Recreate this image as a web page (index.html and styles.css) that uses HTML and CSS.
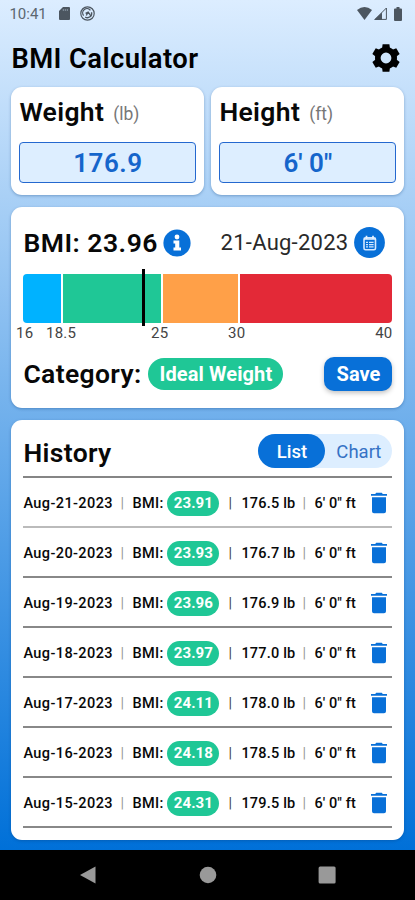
FILE: index.html
```html
<!DOCTYPE html>
<html lang="en">
<head>
<meta charset="utf-8">
<title>BMI Calculator</title>
<link rel="stylesheet" href="styles.css">
</head>
<body>
<svg width="0" height="0" class="defs">
  <symbol id="trash" viewBox="0 0 16 22"><path d="M0 2h4.2L5.2.8h5.6l1 1.2H16v1.7H0zM1 5.2h14v14a2 2 0 0 1-2 2H3a2 2 0 0 1-2-2z"/></symbol>
</svg>
<main class="app">
  <div class="status">
    <span class="clock">10:41</span>
    <svg class="sd" viewBox="0 0 11 13"><path d="M4 0h6q1 0 1 1v11q0 1-1 1H1q-1 0-1-1V4z" fill="#4c5660"/><path d="M4.3 2v2M6.3 2v2M8.3 2v2" stroke="#8795a3"/></svg>
    <svg class="sync" viewBox="0 0 15 15" fill="none" stroke="#4c5660"><circle cx="7.5" cy="7.5" r="6.7" stroke-width="1.2"/><path d="M3.6 9.6A4.3 4.3 0 0 1 10.4 4.3M11.5 6.2A4.3 4.3 0 0 1 5.2 11.1" stroke-width="1.3"/><path d="M5.6 7.3 8.2 6l2.9 4.3M8.2 6 6.3 9.5" stroke-width="1.3"/></svg>
    <span class="grow"></span>
    <svg class="wifi" viewBox="0 0 15 13"><path d="M0 3Q7.5-3 15 3L7.5 13z" fill="#4c5660"/></svg>
    <svg class="signal" viewBox="0 0 13 13"><path d="M12.4 1v11.4H1z" fill="none" stroke="#4c5660"/><path d="M8 5.4V13H0z" fill="#4c5660"/></svg>
    <svg class="battery" viewBox="0 0 8 14"><path d="M2.5 0h3v1.4H7q1 0 1 1V13q0 1-1 1H1q-1 0-1-1V2.4q0-1 1-1h1.5z" fill="#4c5660"/></svg>
  </div>
  <header class="header">
    <h1>BMI Calculator</h1>
    <svg class="gear" viewBox="0 0 28 28"><g transform="translate(14 14)"><circle r="8.2" fill="none" stroke="#000" stroke-width="5.6"/><path id="tooth" d="M-4-9-3.4-13.8H3.4L4-9z"/><use href="#tooth" transform="rotate(60)"/><use href="#tooth" transform="rotate(120)"/><use href="#tooth" transform="rotate(180)"/><use href="#tooth" transform="rotate(240)"/><use href="#tooth" transform="rotate(300)"/></g></svg>
  </header>
  <div class="inputs">
    <section class="card measure"><h2>Weight<small>(lb)</small></h2><div class="field">176.9</div></section>
    <section class="card measure"><h2>Height<small>(ft)</small></h2><div class="field feet">6' 0"</div></section>
  </div>
  <section class="card result">
    <div class="summary">
      <h2 class="bmi">BMI: 23.96</h2>
      <svg class="info" viewBox="0 0 28 28"><circle cx="14" cy="14" r="13.6" fill="#0870d8"/><circle cx="14" cy="8" r="2.4" fill="#fff"/><path d="M10.5 11.5h5.8v7h1.7v3h-7.5v-3h1.7v-4h-1.7z" fill="#fff"/></svg>
      <span class="date">21-Aug-2023</span>
      <svg class="calendar" viewBox="0 0 31 31"><circle cx="15.5" cy="15.5" r="15.4" fill="#0870d8"/><rect x="10" y="10.7" width="11.5" height="12" rx="1.5" fill="none" stroke="#d4e8ff" stroke-width="1.6"/><path d="M12.5 8.7v3M19 8.7v3M10 12h11.5" stroke="#e6f2ff" stroke-width="1.7"/><path d="M12 15.3h2M15 15.3h4.6M12 17.6h2M15 17.6h4.6M12 19.9h2M15 19.9h4.6" stroke="#d4e8ff" stroke-width="1.2"/></svg>
    </div>
    <div class="scale">
      <i class="under"></i><i class="ideal"></i><i class="over"></i><i class="obese"></i>
      <b class="marker"></b>
    </div>
    <div class="ticks"><span>16</span><span>18.5</span><span>25</span><span>30</span><span>40</span></div>
    <div class="category"><h2>Category:</h2><span class="badge">Ideal Weight</span><span class="grow"></span><button class="save">Save</button></div>
  </section>
  <section class="card history">
    <div class="history-head"><h2>History</h2><div class="toggle"><span class="on">List</span><span class="off">Chart</span></div></div>
    <ul>
      <li><span>Aug-21-2023</span><i>|</i><span class="label">BMI:</span><b>23.91</b><i class="dark">|</i><span class="lb">176.5 lb</span><i>|</i><span class="ft">6' 0" ft</span><svg><use href="#trash"/></svg></li>
      <li><span>Aug-20-2023</span><i>|</i><span class="label">BMI:</span><b>23.93</b><i class="dark">|</i><span class="lb">176.7 lb</span><i>|</i><span class="ft">6' 0" ft</span><svg><use href="#trash"/></svg></li>
      <li><span>Aug-19-2023</span><i>|</i><span class="label">BMI:</span><b>23.96</b><i class="dark">|</i><span class="lb">176.9 lb</span><i>|</i><span class="ft">6' 0" ft</span><svg><use href="#trash"/></svg></li>
      <li><span>Aug-18-2023</span><i>|</i><span class="label">BMI:</span><b>23.97</b><i class="dark">|</i><span class="lb">177.0 lb</span><i>|</i><span class="ft">6' 0" ft</span><svg><use href="#trash"/></svg></li>
      <li><span>Aug-17-2023</span><i>|</i><span class="label">BMI:</span><b>24.11</b><i class="dark">|</i><span class="lb">178.0 lb</span><i>|</i><span class="ft">6' 0" ft</span><svg><use href="#trash"/></svg></li>
      <li><span>Aug-16-2023</span><i>|</i><span class="label">BMI:</span><b>24.18</b><i class="dark">|</i><span class="lb">178.5 lb</span><i>|</i><span class="ft">6' 0" ft</span><svg><use href="#trash"/></svg></li>
      <li><span>Aug-15-2023</span><i>|</i><span class="label">BMI:</span><b>24.31</b><i class="dark">|</i><span class="lb">179.5 lb</span><i>|</i><span class="ft">6' 0" ft</span><svg><use href="#trash"/></svg></li>
    </ul>
  </section>
</main>
<nav class="nav">
  <svg viewBox="0 0 18 18"><path d="M16.5.6v16.8L1 9z"/></svg>
  <svg viewBox="0 0 18 18"><circle cx="9" cy="9" r="8.3"/></svg>
  <svg viewBox="0 0 18 18"><rect x=".6" y=".6" width="17" height="17" rx="1.5"/></svg>
</nav>
</body>
</html>
```
FILE: styles.css
```css
* { box-sizing: border-box; }
body { margin: 0; width: 415px; height: 900px; overflow: hidden; font-family: Roboto, sans-serif; color: #080808; background: #000; }
h1, h2, ul { margin: 0; padding: 0; }
h1, h2 { font-weight: 600; white-space: nowrap; }
svg { display: block; flex: none; }
.defs { position: absolute; }
.grow { flex: 1; }
.app { height: 850px; padding: 0 10.6px 0 11.4px; background: linear-gradient(#dcedff, #0070d8); }
.status { height: 27px; display: flex; align-items: center; }
.clock { width: 47px; margin-left: -2px; font-size: 15px; color: #5c6771; white-space: nowrap; }
.sd { width: 11px; height: 13px; margin-left: 3px; }
.sync { width: 15px; height: 15px; margin-left: 10px; }
.wifi { width: 15px; height: 13px; margin-right: 2px; }
.signal { width: 13px; height: 13px; margin-right: 7px; }
.battery { width: 8px; height: 14px; margin-right: 2px; }
.header { height: 60px; display: flex; justify-content: space-between; align-items: center; padding: 3px 4px 0 0; }
h1 { font-size: 27.4px; letter-spacing: .4px; color: #000; }
.gear { width: 28px; height: 28px; margin-bottom: 2px; }
.card { background: #fff; border-radius: 11px; box-shadow: 0 1px 3px rgba(10, 60, 120, .35); }
.inputs { display: flex; gap: 7px; height: 108px; }
.measure { width: 193px; padding: 9px 8px 0; }
h2 { font-size: 26.5px; line-height: 32px; letter-spacing: .35px; }
.measure small { font-size: 17.5px; font-weight: 400; letter-spacing: 0; color: #777; margin-left: 9px; position: relative; top: -1px; }
.field { height: 41px; margin-top: 13px; border: 1.5px solid #2468cf; border-radius: 4px; background: #ddeeff; color: #1565cb; font-size: 26px; font-weight: 600; letter-spacing: .5px; text-align: center; line-height: 41px; }
.feet { letter-spacing: 0; }
.measure h2 { height: 33px; }
.result { height: 201px; margin-top: 12px; padding: 20px 12px 0; }
.summary { display: flex; align-items: center; height: 31px; }
.bmi { width: 140px; letter-spacing: .5px; }
.info { width: 28px; height: 28px; }
.date { flex: 1; text-align: right; font-size: 22px; letter-spacing: .25px; color: #292929; margin-right: 6px; white-space: nowrap; }
.calendar { width: 31px; height: 31px; margin-right: 7px; }
.scale { position: relative; height: 49px; margin-top: 16px; display: grid; grid-template-columns: 37.4px 98.4px 75px 1fr; gap: 1.8px; }
.under { background: #00b2ff; border-radius: 4px 0 0 4px; }
.ideal { background: #1fc796; }
.over { background: #ffa048; }
.obese { background: #e32937; border-radius: 0 4px 4px 0; }
.marker { position: absolute; left: 118.6px; top: -5px; width: 3px; height: 57px; background: #000; }
.ticks { display: grid; grid-template-columns: 30px 78px 96px 74px 1fr; margin: 1px 0 0 -7.4px; font-size: 15px; line-height: 18px; color: #444; letter-spacing: .2px; }
.ticks span:nth-child(3) { padding-left: 27px; }
.ticks span:nth-child(4) { padding-left: 8px; }
.ticks span:last-child { text-align: right; }
.category { display: flex; align-items: center; margin-top: 15px; height: 34px; }
.category h2 { width: 118px; }
.badge { margin-left: 7px; width: 135px; height: 32px; border-radius: 16px; background: #1fc796; color: #fff; font-weight: 700; font-size: 20px; line-height: 33px; letter-spacing: .1px; text-align: center; white-space: nowrap; }
.save { font: 700 20px/34px Roboto, sans-serif; color: #fff; background: #0870d8; border: 0; padding: 0; width: 68px; height: 34px; border-radius: 10px; box-shadow: 0 2px 5px rgba(0, 0, 0, .25); }
.history { height: 420px; margin-top: 12px; padding: 14px 12px 0; }
.history-head { display: flex; justify-content: space-between; height: 42px; }
.history-head h2 { line-height: 37px; }
.toggle { display: flex; width: 134px; height: 34px; border-radius: 17px; background: #ddeeff; font-size: 18.5px; line-height: 36px; text-align: center; }
.on { width: 67px; background: #0870d8; border-radius: 17px; color: #fff; font-weight: 500; }
.off { width: 67px; color: #3572c5; }
ul { list-style: none; border-top: 2px solid #858585; }
li { height: 50px; display: grid; grid-template-columns: 94px 10px 40px 52px 22px 58px 10px 49px 1fr; align-items: center; padding-top: 2px; border-bottom: 2px solid #888; font-size: 14.5px; font-weight: 500; letter-spacing: .4px; white-space: nowrap; }
li:first-child { border-color: #bbb; }
li i { font-style: normal; color: #999; text-align: center; font-weight: 400; }
li .dark { color: #444; }
li .label { padding-left: 5px; }
li .lb { letter-spacing: .2px; }
li .ft { padding-left: 5px; letter-spacing: .1px; }
li b { height: 25px; border-radius: 13px; background: #1fc796; color: #fff; font-size: 15px; line-height: 25px; letter-spacing: .1px; text-align: center; }
li svg { width: 16px; height: 22px; margin-left: 12.5px; fill: #0870d8; }
.nav { height: 50px; display: flex; justify-content: space-between; align-items: center; padding: 0 79px; background: #000; fill: #999; }
.nav svg { width: 18px; height: 18px; }
```
